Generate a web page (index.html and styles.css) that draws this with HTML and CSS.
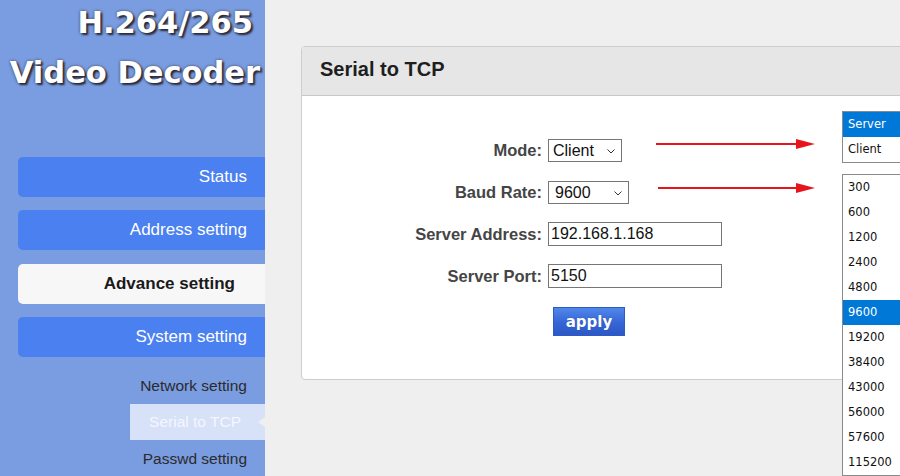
FILE: index.html
```html
<!DOCTYPE html>
<html>
<head>
<meta charset="utf-8">
<title>Serial to TCP</title>
<link rel="stylesheet" href="styles.css">
</head>
<body>
<aside class="sidebar">
  <div class="brand">
    <div class="brand-line1">H.264/265</div>
    <div class="brand-line2">Video Decoder</div>
  </div>
  <nav class="nav">
    <a class="nav-btn">Status</a>
    <a class="nav-btn">Address setting</a>
    <a class="nav-btn nav-btn-active">Advance setting</a>
    <a class="nav-btn">System setting</a>
  </nav>
  <ul class="subnav">
    <li class="sub-item">Network setting</li>
    <li class="sub-item sub-item-active">Serial to TCP</li>
    <li class="sub-item">Passwd setting</li>
  </ul>
</aside>
<main class="main">
  <section class="panel">
    <header class="panel-head">Serial to TCP</header>
    <div class="panel-body">
      <div class="form">
        <label class="f-label">Mode:</label>
        <div class="f-field">
          <span class="sel sel-mode">Client
            <svg class="chev" width="8" height="5" viewBox="0 0 8 5"><path d="M0.5 0.5 L4 4 L7.5 0.5" fill="none" stroke="#333" stroke-width="1"/></svg>
          </span>
        </div>
        <label class="f-label">Baud Rate:</label>
        <div class="f-field">
          <span class="sel sel-baud">9600
            <svg class="chev" width="8" height="5" viewBox="0 0 8 5"><path d="M0.5 0.5 L4 4 L7.5 0.5" fill="none" stroke="#333" stroke-width="1"/></svg>
          </span>
        </div>
        <label class="f-label">Server Address:</label>
        <div class="f-field"><input class="txt" type="text" value="192.168.1.168"></div>
        <label class="f-label">Server Port:</label>
        <div class="f-field"><input class="txt" type="text" value="5150"></div>
        <div class="f-spacer"></div>
        <div class="f-actions"><button class="apply">apply</button></div>
      </div>
    </div>
  </section>
</main>

<svg class="arrows" width="180" height="70" viewBox="0 0 180 70">
  <line x1="6" y1="14" x2="150" y2="14" stroke="#e8141c" stroke-width="2"/>
  <polygon points="146,9 165,14 146,19" fill="#e8141c"/>
  <line x1="8" y1="58" x2="150" y2="58" stroke="#e8141c" stroke-width="2"/>
  <polygon points="146,53 165,58 146,63" fill="#e8141c"/>
</svg>

<ul class="dd dd-mode">
  <li class="dd-item dd-sel">Server</li>
  <li class="dd-item">Client</li>
</ul>
<ul class="dd dd-baud">
  <li class="dd-item">300</li>
  <li class="dd-item">600</li>
  <li class="dd-item">1200</li>
  <li class="dd-item">2400</li>
  <li class="dd-item">4800</li>
  <li class="dd-item dd-sel">9600</li>
  <li class="dd-item">19200</li>
  <li class="dd-item">38400</li>
  <li class="dd-item">43000</li>
  <li class="dd-item">56000</li>
  <li class="dd-item">57600</li>
  <li class="dd-item">115200</li>
</ul>
</body>
</html>
```

FILE: styles.css
```css
* { box-sizing: border-box; }
html, body { margin: 0; padding: 0; }
body {
  position: relative;
  display: flex;
  width: 900px;
  height: 476px;
  overflow: hidden;
  background: #efefef;
  font-family: "Liberation Sans", Arial, sans-serif;
}

/* Sidebar */
.sidebar {
  flex: none;
  width: 265px;
  background: #7a9ce0;
  display: flex;
  flex-direction: column;
}
.brand {
  margin-top: -2px;
  height: 102px;
  text-align: right;
  font-family: "DejaVu Sans", Verdana, sans-serif;
  font-weight: bold;
  font-size: 30.5px;
  line-height: 50px;
  color: #fff;
  text-shadow: 2px 2px 2px #2a2a3a, 0 0 3px #445;
}
.brand-line1 { padding-right: 12px; }
.brand-line2 { padding-right: 5px; }

.nav {
  margin-top: 58px;
  display: flex;
  flex-direction: column;
  gap: 13.5px;
  padding-left: 18px;
}
.nav-btn {
  display: block;
  height: 40px;
  line-height: 40px;
  background: #4a80f0;
  color: #fff;
  font-size: 17px;
  text-align: right;
  padding-right: 18px;
  border-radius: 5px 0 0 5px;
}
.nav-btn-active {
  background: #f7f7f7;
  color: #1a1a1a;
  font-weight: bold;
  padding-right: 30px;
}

.subnav {
  list-style: none;
  margin: 11px 0 0 0;
  padding: 0;
}
.sub-item {
  height: 36px;
  line-height: 36px;
  text-align: right;
  padding-right: 18px;
  font-size: 15.5px;
  color: #2b2b2b;
}
.sub-item-active {
  position: relative;
  margin-left: 130px;
  background: #d7e1f8;
  color: #f4f7ff;
  padding-right: 24px;
}
.sub-item-active::after {
  content: "";
  position: absolute;
  right: 0;
  top: 13px;
  border-style: solid;
  border-width: 5px 7px 5px 0;
  border-color: transparent #efefef transparent transparent;
}
.sub-item-active + .sub-item { line-height: 38px; }

/* Main */
.main {
  flex: 1;
  min-width: 0;
  overflow: hidden;
  padding: 46px 0 0 36px;
}
.panel {
  width: 660px;
  height: 334px;
  background: #fff;
  border: 1px solid #cdcdcd;
  border-radius: 4px;
  overflow: hidden;
}
.panel-head {
  height: 49px;
  background: #e6e6e6;
  border-bottom: 1px solid #c9c9c9;
  padding: 10px 0 0 18px;
  font-size: 20px;
  font-weight: bold;
  color: #1e1e1e;
  line-height: 24px;
}
.panel-body {
  padding-top: 33px;
}
.form {
  display: grid;
  grid-template-columns: 240px 1fr;
  grid-auto-rows: 42px;
  column-gap: 6px;
  align-items: center;
}
.f-label {
  text-align: right;
  font-weight: bold;
  font-size: 16.5px;
  color: #454545;
}
.f-field { display: flex; align-items: center; }
.f-actions {
  align-self: start;
  margin-top: 10px;
  padding-left: 5px;
  height: 29px;
}

.sel {
  position: relative;
  display: inline-block;
  height: 23px;
  line-height: 21px;
  border: 1px solid #767676;
  background: #fff;
  font-size: 16px;
  color: #111;
  padding-left: 4px;
}
.sel-mode { width: 74px; }
.sel-baud { width: 81px; padding-left: 6px; }
.chev {
  position: absolute;
  right: 6px;
  top: 9px;
}

.txt {
  width: 174px;
  height: 24px;
  border: 1px solid #767676;
  border-radius: 0;
  padding: 0 2px;
  font-family: "Liberation Sans", Arial, sans-serif;
  font-size: 16px;
  color: #111;
  outline: none;
}

.apply {
  width: 72px;
  height: 29px;
  border: 1px solid #2c5bc4;
  background: linear-gradient(#5187ea, #3565d6 55%, #2d58c6);
  color: #fff;
  font-family: "DejaVu Sans", Verdana, sans-serif;
  font-weight: bold;
  font-size: 15px;
  padding: 0;
  text-shadow: 0 0 1px #1b3f9e;
}

/* Annotation overlays */
.arrows {
  position: absolute;
  left: 650px;
  top: 130px;
}
.dd {
  position: absolute;
  left: 842px;
  width: 80px;
  list-style: none;
  margin: 0;
  padding: 0;
  background: #fff;
  border: 1px solid #8a8a8a;
  font-family: "DejaVu Sans", Tahoma, sans-serif;
  font-size: 11.5px;
  color: #111;
}
.dd-mode { top: 111px; }
.dd-baud { top: 174px; }
.dd-item {
  height: 25px;
  line-height: 25px;
  padding-left: 5px;
}
.dd-sel {
  background: #0078d7;
  color: #fff;
}
```
